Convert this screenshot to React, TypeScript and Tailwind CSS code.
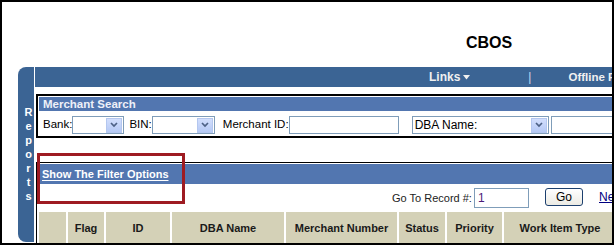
import React from "react";

const font = { fontFamily: '"Liberation Sans", Arial, sans-serif' };

function Chevron() {
  return (
    <span className="flex h-[15px] w-[16px] shrink-0 items-center justify-center border border-[#b4c7ef] bg-gradient-to-b from-[#d2defc] to-[#b5c9f5]">
      <svg width="8" height="6" viewBox="0 0 8 6">
        <path d="M1 1 L4 4 L7 1" stroke="#4d6185" strokeWidth="1.7" fill="none" />
      </svg>
    </span>
  );
}

export default function App() {
  return (
    <div className="h-[246px] w-[614px] bg-white" style={font}>
      <div className="relative h-[245px] w-[614px] overflow-hidden border-2 border-black bg-white">
        {/* Title */}
        <div className="h-[65px] pl-[464px] pt-[32px]">
          <div className="text-[16px] font-bold leading-[18px] text-black">CBOS</div>
        </div>

        <div className="flex items-start">
          {/* Sidebar tab */}
          <div className="ml-[16px] flex h-[175px] w-[16px] shrink-0 flex-col items-center rounded-l-[8px] bg-[#3b6494] pl-[5px] pt-[38px] text-[11px] font-bold leading-[14px] text-white">
            <span>R</span>
            <span>e</span>
            <span>p</span>
            <span>o</span>
            <span>r</span>
            <span>t</span>
            <span>s</span>
          </div>

          {/* Main column */}
          <div className="ml-[1px] flex w-[720px] shrink-0 flex-col">
            {/* Header bar */}
            <div className="flex h-[20px] items-center bg-[#3b6494] pl-[394px] text-[12px] font-bold leading-[20px] text-[#f0f0f0]">
              <span>Links</span>
              <svg className="ml-[3px]" width="7" height="5" viewBox="0 0 7 5">
                <path d="M0 0 L7 0 L3.5 4.5 Z" fill="#f0f0f0" />
              </svg>
              <span className="ml-[58px] font-normal text-[#c9d8f0]">|</span>
              <span className="ml-[37px] whitespace-nowrap text-[11.5px]">Offline Reports</span>
            </div>

            {/* Merchant Search box */}
            <div className="ml-[1px] mt-[7px] border-2 border-black p-[1px]">
              <div className="h-[14px] bg-[#5276b0] pl-[4px] text-[11.5px] font-bold leading-[14px] text-[#eef0f8]">
                Merchant Search
              </div>
              <div className="flex items-center pb-[1px] pl-[4px] pt-[5px] text-[11.5px] text-black">
                <span className="whitespace-nowrap">Bank:</span>
                <div className="flex h-[18px] w-[52px] items-center justify-end border border-[#7f9db9] bg-white p-[1px]">
                  <Chevron />
                </div>
                <span className="ml-[5px] whitespace-nowrap">BIN:</span>
                <div className="flex h-[18px] w-[63px] items-center justify-end border border-[#7f9db9] bg-white p-[1px]">
                  <Chevron />
                </div>
                <span className="ml-[8px] whitespace-nowrap">Merchant ID:</span>
                <div className="h-[18px] w-[110px] border border-[#7f9db9] bg-white" />
                <div className="ml-[13px] flex h-[18px] w-[137px] items-center justify-between border border-[#7f9db9] bg-white p-[1px] pl-[2px]">
                  <span className="whitespace-nowrap text-[12px] leading-[14px]">DBA Name:</span>
                  <Chevron />
                </div>
                <div className="ml-[2px] h-[18px] w-[150px] border border-[#7f9db9] bg-white" />
              </div>
            </div>

            {/* Lower section */}
            <div className="ml-[1px] mt-[24px] h-[120px] border-l border-t border-black pl-[1px] pt-[1px]">
              <div className="h-[20px] bg-[#5276b0] pl-[4px] text-[11px] font-bold leading-[20px] text-white">
                <span className="underline underline-offset-[2px]">Show The Filter Options</span>
              </div>
              <div className="flex h-[28px] items-start pl-[354px] pt-[4px] text-[11px] text-[#222]">
                <span className="w-[82px] whitespace-nowrap leading-[20px]">Go To Record #:</span>
                <div className="flex h-[20px] w-[55px] items-center border border-[#7f9db9] bg-white pl-[3px] text-[12px] text-[#4b1a78]">
                  1
                </div>
                <div className="ml-[16px] flex h-[18px] w-[38px] items-center justify-center rounded-[3px] border border-[#1c3f6e] bg-gradient-to-b from-white to-[#ecebe4] text-[12px] text-black">
                  Go
                </div>
                <span className="ml-[16px] whitespace-nowrap text-[12px] leading-[18px] text-[#000080] underline">
                  Next
                </span>
              </div>
              <div className="ml-[1px] flex gap-[2px] text-[11px] font-bold text-[#1a1a1a]">
                <div className="h-[32px] w-[27px] bg-[#d4d1b7]" />
                <div className="flex h-[32px] w-[36px] items-center justify-center bg-[#d4d1b7]">Flag</div>
                <div className="flex h-[32px] w-[64px] items-center justify-center bg-[#d4d1b7]">ID</div>
                <div className="flex h-[32px] w-[112px] items-center justify-center bg-[#d4d1b7]">DBA Name</div>
                <div className="flex h-[32px] w-[111px] items-center justify-center whitespace-nowrap bg-[#d4d1b7]">Merchant Number</div>
                <div className="flex h-[32px] w-[46px] items-center justify-center bg-[#d4d1b7]">Status</div>
                <div className="flex h-[32px] w-[55px] items-center justify-center bg-[#d4d1b7]">Priority</div>
                <div className="flex h-[32px] w-[112px] items-center justify-center whitespace-nowrap bg-[#d4d1b7]">Work Item Type</div>
              </div>
            </div>
          </div>
        </div>

        {/* Red annotation box */}
        <div className="absolute left-[35px] top-[151px] h-[51px] w-[148px] border-[3px] border-[#9e1b22]" />
      </div>
    </div>
  );
}
